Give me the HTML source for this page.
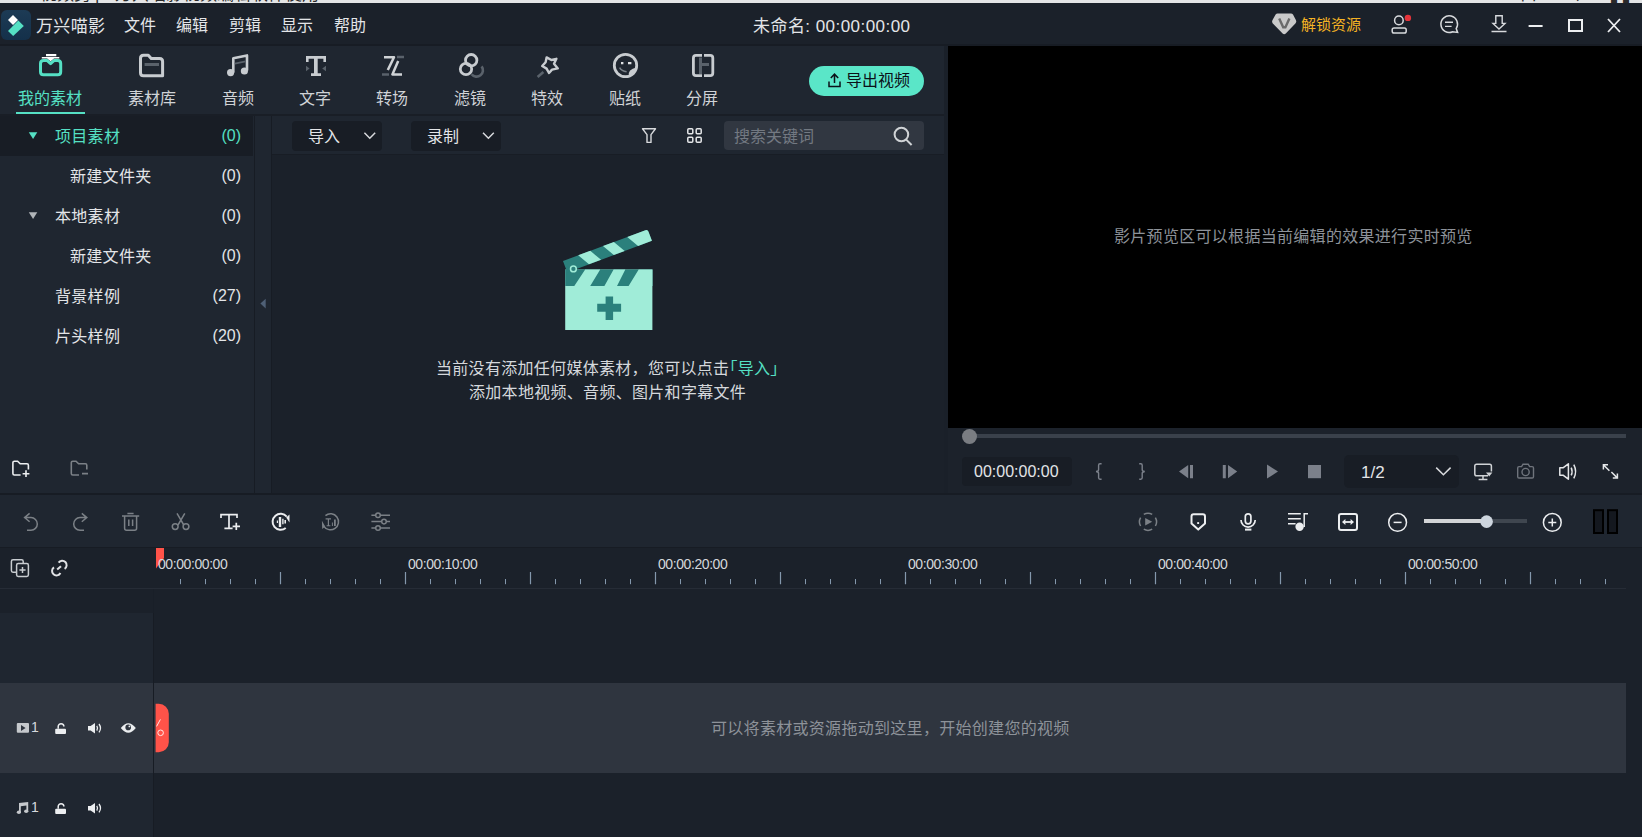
<!DOCTYPE html>
<html lang="zh-CN">
<head>
<meta charset="utf-8">
<title>万兴喵影</title>
<style>
*{box-sizing:border-box;margin:0;padding:0}
html,body{width:1642px;height:837px;overflow:hidden;background:#1b212a}
body{position:relative;font-family:"Liberation Sans","Noto Sans CJK SC",sans-serif;color:#d5d8dc;font-size:16px}
.a{position:absolute}
.t{position:absolute;white-space:nowrap;line-height:1;transform:translateY(1px)}
svg{position:absolute;overflow:visible}
/* top */
#strip{left:0;top:0;width:1642px;height:3px;background:#e4e5e6;overflow:hidden}
#strip span{position:absolute;top:-14px;font-size:17px;line-height:1;color:#2a2a2a;white-space:nowrap}
#titlebar{left:0;top:3px;width:1642px;height:41px;background:#1b212a}
#titleline{left:0;top:44px;width:1642px;height:2px;background:#171c24}
.menu{top:17px;font-size:16px;color:#e3e5e8}
/* tabs */
#tabbar{left:0;top:46px;width:944px;height:68px;background:#1f2630}
#tabline{left:0;top:114px;width:944px;height:2px;background:#191e26}
.tab{top:90px;font-size:16px;color:#d0d3d7;width:100px;text-align:center}
/* tree */
#tree{left:0;top:116px;width:255px;height:377px;background:#1f2630}
#treesel{left:0;top:116px;width:253px;height:40px;background:#181d25}
.tr{font-size:16px;color:#e3e5e8;letter-spacing:0.3px}
.cnt{font-size:16px;color:#e3e5e8;text-align:right;width:60px;transform:none}
#split{left:254px;top:116px;width:18px;height:377px;background:#1f2630;border-left:1px solid #171c24;border-right:1px solid #171c24}
/* media */
#media{left:272px;top:116px;width:672px;height:377px;background:#1b212a}
#mediabar{left:272px;top:116px;width:672px;height:39px;background:#1f2630;border-bottom:1px solid #181d25}
.btn{background:#181d25;border-radius:4px;height:30px;top:121px}
/* preview */
#pvwrap{left:944px;top:46px;width:698px;height:447px;background:#1c222b;border-left:4px solid #1a2029}
#pv{left:948px;top:46px;width:694px;height:382px;background:#000}
/* timeline */
#hsep{left:0;top:493px;width:1642px;height:2px;background:#171c24}
#tlbar{left:0;top:495px;width:1642px;height:52px;background:#1f2630}
.rl{top:556px;font-size:14px;letter-spacing:-0.42px;color:#d5d8dc}
#ruler{left:0;top:547px;width:1642px;height:42px;background:#1b212a}
</style>
</head>
<body>
<div class="a" id="titlebar"></div>
<div class="a" id="strip"><span style="left:11px">A</span><span style="left:40px">视频剪</span><span style="left:95px">|</span><span style="left:115px">万兴喵影视频编辑软件使用</span><span style="left:1520px">口</span><span style="left:1563px">公</span><span style="left:1611px">▌▌</span></div>
<div class="a" id="titleline"></div>

<!-- logo -->
<svg style="left:1px;top:10px" width="30" height="30" viewBox="0 0 30 30">
  <defs><linearGradient id="lg" x1="0" y1="0" x2="0" y2="1"><stop offset="0" stop-color="#1d3b55"/><stop offset="1" stop-color="#14304a"/></linearGradient></defs>
  <rect x="0" y="0" width="30" height="30" rx="6" fill="url(#lg)"/>
  <path d="M12 5 L17 10 L12 15 L7 10 Z" fill="#fff"/>
  <path d="M17.3 10.5 L22.8 16 L12.2 26 L7 21 Z" fill="#55e0c4"/>
</svg>
<div class="t menu" style="left:36px;font-size:17px;letter-spacing:0.35px">万兴喵影</div>
<div class="t menu" style="left:124px">文件</div>
<div class="t menu" style="left:176px">编辑</div>
<div class="t menu" style="left:229px">剪辑</div>
<div class="t menu" style="left:281px">显示</div>
<div class="t menu" style="left:334px">帮助</div>
<div class="t menu" style="left:753px;font-size:17px;letter-spacing:0.45px">未命名: 00:00:00:00</div>
<div class="t" style="left:1301px;top:16px;font-size:15px;color:#f5b324">解锁资源</div>

<!-- tab bar -->
<div class="a" id="tabbar"></div>
<div class="a" id="tabline"></div>
<div class="t tab" style="left:0px;color:#55e0c4">我的素材</div>
<div class="a" style="left:16px;top:112px;width:69px;height:2px;background:#55e0c4"></div>
<div class="t tab" style="left:102px">素材库</div>
<div class="t tab" style="left:188px">音频</div>
<div class="t tab" style="left:265px">文字</div>
<div class="t tab" style="left:342px">转场</div>
<div class="t tab" style="left:420px">滤镜</div>
<div class="t tab" style="left:497px">特效</div>
<div class="t tab" style="left:575px">贴纸</div>
<div class="t tab" style="left:652px">分屏</div>

<!-- export button -->
<div class="a" style="left:809px;top:66px;width:115px;height:30px;border-radius:15px;background:#5ae6c8"></div>
<div class="t" style="left:846px;top:72px;font-size:16px;color:#0b1118">导出视频</div>

<!-- tree -->
<div class="a" id="tree"></div>
<div class="a" id="treesel"></div>
<div class="t tr" style="left:55px;top:128px;color:#55e0c4">项目素材</div>
<div class="t cnt" style="left:181px;top:128px;color:#55e0c4">(0)</div>
<div class="t tr" style="left:70px;top:168px">新建文件夹</div>
<div class="t cnt" style="left:181px;top:168px">(0)</div>
<div class="t tr" style="left:55px;top:208px">本地素材</div>
<div class="t cnt" style="left:181px;top:208px">(0)</div>
<div class="t tr" style="left:70px;top:248px">新建文件夹</div>
<div class="t cnt" style="left:181px;top:248px">(0)</div>
<div class="t tr" style="left:55px;top:288px">背景样例</div>
<div class="t cnt" style="left:181px;top:288px">(27)</div>
<div class="t tr" style="left:55px;top:328px">片头样例</div>
<div class="t cnt" style="left:181px;top:328px">(20)</div>
<div class="a" id="split"></div>

<!-- media -->
<div class="a" id="media"></div>
<div class="a" id="mediabar"></div>
<div class="a btn" style="left:292px;width:90px"></div>
<div class="t" style="left:308px;top:128px;font-size:16px;color:#e3e5e8">导入</div>
<div class="a btn" style="left:411px;width:90px"></div>
<div class="t" style="left:427px;top:128px;font-size:16px;color:#e3e5e8">录制</div>
<div class="a" style="left:724px;top:121px;width:200px;height:29px;border-radius:4px;background:#313741"></div>
<div class="t" style="left:734px;top:128px;font-size:16px;color:#737982">搜索关键词</div>
<div class="t" style="left:436px;top:360px;font-size:16px;color:#d5d8dc;letter-spacing:0.3px">当前没有添加任何媒体素材，您可以点击<span style="color:#55e0c4">｢导入｣</span></div>
<div class="t" style="left:469px;top:384px;font-size:16px;color:#d5d8dc;letter-spacing:0.3px">添加本地视频、音频、图片和字幕文件</div>

<!-- preview -->
<div class="a" id="pvwrap"></div>
<div class="a" id="pv"></div>
<div class="t" style="left:1114px;top:228px;font-size:16px;color:#8d9299;letter-spacing:0.3px">影片预览区可以根据当前编辑的效果进行实时预览</div>
<div class="a" style="left:969px;top:434px;width:657px;height:4px;background:#3a414b"></div>
<div class="a" style="left:962px;top:429px;width:15px;height:15px;border-radius:8px;background:#7a7d82"></div>
<div class="a" style="left:962px;top:457px;width:110px;height:29px;border-radius:4px;background:#181d25"></div>
<div class="t" style="left:974px;top:463px;font-size:16px;color:#e3e5e8">00:00:00:00</div>
<div class="a" style="left:1344px;top:455px;width:115px;height:33px;border-radius:5px;background:#181d25"></div>
<div class="t" style="left:1361px;top:463px;font-size:17px;color:#e3e5e8">1/2</div>

<!-- timeline -->
<div class="a" id="hsep"></div>
<div class="a" id="tlbar"></div>
<div class="a" id="ruler"></div>
<div class="a" style="left:0;top:547px;width:1642px;height:1px;background:#171c24"></div>
<div class="a" style="left:0;top:588px;width:1626px;height:1px;background:#262c36"></div>
<div class="a" style="left:0;top:613px;width:154px;height:70px;background:#1f2630"></div>
<div class="a" style="left:0;top:683px;width:1626px;height:90px;background:#2f353f"></div>
<div class="a" style="left:0;top:773px;width:154px;height:64px;background:#1f2630"></div>
<div class="a" style="left:153px;top:589px;width:1px;height:24px;background:#191f28"></div>
<div class="a" style="left:153px;top:613px;width:1px;height:224px;background:#171c24"></div>
<div class="t" style="left:711px;top:720px;font-size:16px;color:#8d9299;letter-spacing:0.3px">可以将素材或资源拖动到这里，开始创建您的视频</div>
<div class="t" style="left:31px;top:719px;font-size:14px;color:#d5d8dc">1</div>
<div class="t" style="left:31px;top:799px;font-size:14px;color:#d5d8dc">1</div>

<svg id="ico" style="left:0;top:0" width="1642" height="837" viewBox="0 0 1642 837" fill="none" stroke-linecap="butt" stroke-linejoin="miter">
<!-- ===== title bar right ===== -->
<path d="M1277.6 13.5 H1291 Q1292.2 13.5 1293 14.6 L1296 20.3 Q1296.8 21.8 1295.6 23.2 L1285.8 33.6 Q1284.2 35 1282.6 33.6 L1272.6 23.2 Q1271.6 21.8 1272.4 20.3 L1275.6 14.6 Q1276.3 13.5 1277.6 13.5 Z" fill="#c9c9c9"/>
<path d="M1279.2 18.6 L1283.2 27.2 H1285.4 L1289.4 18.6" stroke="#6a6a6a" stroke-width="2.4"/>
<g stroke="#d8dadd" stroke-width="1.5">
<circle cx="1398.9" cy="20.4" r="4.3"/>
<rect x="1392.2" y="28" width="14" height="5" rx="1.8"/>
<path d="M1456.2 28.6 A8.3 8.3 0 1 0 1452.6 31.7 L1457.6 32.4 Z"/>
<path d="M1445 22.2 H1453 M1445 26.4 H1451.6" stroke-width="1.4"/>
<path d="M1495.8 15.8 H1502.2 V23.4 H1505 L1499 29 L1493 23.4 H1495.8 Z" stroke-width="1.4"/>
<path d="M1491.5 31.5 H1506.5"/>
</g>
<circle cx="1407.9" cy="17.9" r="3.2" fill="#e6343b"/>
<path d="M1528.6 26 H1542.6 M1569 20 H1582 V31 H1569 Z" stroke="#eceef0" stroke-width="2"/>
<path d="M1608 19 L1620 32 M1620 19 L1608 32" stroke="#eceef0" stroke-width="1.8"/>

<!-- ===== tab icons ===== -->
<path d="M40.5 63.4 Q40.5 60.4 43.5 60.4 H47 L50.6 63.6 L54.2 60.4 H57.7 Q60.7 60.4 60.7 63.4 V71.7 Q60.7 74.7 57.7 74.7 H43.5 Q40.5 74.7 40.5 71.7 Z" stroke="#55e0c4" stroke-width="3" stroke-linejoin="round"/>
<path d="M46 54 H56.3 V56.2 H46 Z M41.8 56.9 H59.3 V58.5 H54 L50.6 61.2 L47.2 58.5 H41.8 Z" fill="#ffffff"/>
<path d="M140.5 58.3 Q140.5 55.3 143.5 55.3 H148.3 L151.2 58.6 H159.6 Q162.6 58.6 162.6 61.6 V75.7 H143.5 Q140.5 75.7 140.5 72.7 Z" stroke="#c8ccd0" stroke-width="3" stroke-linejoin="round"/>
<path d="M144.6 64.5 H159" stroke="#5a626b" stroke-width="3"/>
<!-- music -->
<path d="M233.3 72.5 V58.3 L247 55.4 V70.5" stroke="#c8ccd0" stroke-width="2.6" stroke-linejoin="round"/>
<circle cx="230.6" cy="72.6" r="3.6" fill="#c8ccd0"/><circle cx="244.4" cy="71" r="3.6" fill="#c8ccd0"/>
<path d="M234.8 63.6 L245.6 61.4" stroke="#5a626b" stroke-width="1.6"/>
<!-- T -->
<path d="M306 62 V56 H326 V62 H323.4 V58.8 H317.7 V73.2 H321 V76 H311 V73.2 H314 V58.8 H308.6 V62 Z" fill="#c8ccd0"/>
<path d="M306 65.7 L309.6 68.5 L306 71.3 Z M326 65.7 L322.2 68.5 L326 71.3 Z" fill="#5a626b"/>
<!-- transition -->
<path d="M384 57.2 H394 L387.8 70 M398.2 61 L392.4 74.4 H402" stroke="#d0d3d6" stroke-width="2.5" stroke-linejoin="round"/>
<path d="M397 57 H404 M382 74.5 H389" stroke="#5a626b" stroke-width="2.6"/>
<!-- filter -->
<path d="M481.6 66.4 A6 6 0 1 1 471.6 74.2" stroke="#5a626b" stroke-width="2.6"/>
<circle cx="471.2" cy="60.2" r="5.7" stroke="#c8ccd0" stroke-width="2.8"/>
<circle cx="466" cy="69" r="5.7" stroke="#c8ccd0" stroke-width="2.8"/>
<!-- star -->
<path d="M546.6 57.4 L551.4 60 L556.4 58.8 L554 63.8 L557.8 68.4 L552 69.6 L549 73 L546.6 68.6 L542.2 66 L545.6 62.2 Z" stroke="#c8ccd0" stroke-width="2.4" stroke-linejoin="round"/>
<path d="M537.6 77 L543.4 72" stroke="#5a626b" stroke-width="2.6"/>
<!-- sticker -->
<circle cx="625.5" cy="65.5" r="11.2" stroke="#c8ccd0" stroke-width="2.8"/>
<path d="M636.6 67.6 A11.2 11.2 0 0 1 628.6 76.4 Q627.6 69.4 636.6 67.6 Z" fill="#c8ccd0"/>
<path d="M621 62 H623.4 V64.2 H621 Z M628 62 H631.4 V64.2 H628 Z" fill="#dfe1e4"/>
<path d="M619.6 67.6 Q621.6 71 626.6 71.8" stroke="#7a8189" stroke-width="1.5"/>
<!-- split -->
<path d="M702 55.4 H696 Q693.4 55.4 693.4 58 V73 Q693.4 75.6 696 75.6 H702 M704 55.4 H710.2 Q712.8 55.4 712.8 58 V73 Q712.8 75.6 710.2 75.6 H704" stroke="#c8ccd0" stroke-width="2.8"/>
<path d="M699 57.5 H702 V63 H709 V66 H702 V74 H699 Z" fill="#5a626b"/>

<!-- export icon -->
<path d="M834.5 83 V74.4 M830.8 78 L834.5 74.2 L838.2 78 M829 81.5 V86.6 H840 V81.5" stroke="#0b1118" stroke-width="1.5"/>

<!-- tree arrows -->
<path d="M28.8 132.2 H37.3 L33.05 138.9 Z" fill="#55e0c4"/>
<path d="M28.8 212.2 H37.3 L33.05 218.9 Z" fill="#b0b4b8"/>
<path d="M265.7 298.7 V308.6 L260.4 303.6 Z" fill="#4f6076"/>

<!-- media bar -->
<path d="M364.4 132.8 L369.8 138.2 L375.2 132.8 M483 132.8 L488.4 138.2 L493.8 132.8" stroke="#d8dadd" stroke-width="1.5"/>
<path d="M642.5 128.8 H655.5 L651 134.6 V142.4 H647 V134.6 Z" stroke="#d8dadd" stroke-width="1.4" stroke-linejoin="round"/>
<g stroke="#e4e6e8" stroke-width="1.5"><rect x="687.8" y="128.8" width="5" height="5" rx="1"/><rect x="696.2" y="128.8" width="5" height="5" rx="1"/><rect x="687.8" y="137.2" width="5" height="5" rx="1"/><rect x="696.2" y="137.2" width="5" height="5" rx="1"/></g>
<circle cx="901.4" cy="134.5" r="6.8" stroke="#d0d3d6" stroke-width="2"/><path d="M906.2 139.6 L911.6 145" stroke="#d0d3d6" stroke-width="2"/>

<!-- folder +/- -->
<path d="M20.6 475 H14.4 Q12.9 475 12.9 473.5 V462.6 Q12.9 461.2 14.4 461.2 H17.6 L20.2 463.8 H27 Q28.4 463.8 28.4 465.2 V469.4 M22.6 473.7 H29.4 M26 470.3 V477.1" stroke="#eceef0" stroke-width="1.6"/>
<path d="M79 475 H72.8 Q71.3 475 71.3 473.5 V462.6 Q71.3 461.2 72.8 461.2 H76 L78.6 463.8 H85.4 Q86.8 463.8 86.8 465.2 V469.4 M82 473.6 H88" stroke="#7b8086" stroke-width="1.6"/>
</svg>


<svg id="ico2" style="left:0;top:0" width="1642" height="837" viewBox="0 0 1642 837" fill="none">
<!-- clapper -->
<g>
<path d="M565.2 269.4 H652.4 V330.1 H565.2 Z" fill="#a0ecd8"/>
<path d="M565.2 269.4 H652.4 V286 H565.2 Z" fill="#2b807c"/>
<path d="M585.2 269.4 H600.2 L590.2 286 H574.3 Z M613.6 269.4 H625.3 L617 286 H604.4 Z M638.7 269.4 H652.4 V286 H628.6 Z" fill="#a0ecd8"/>
<path d="M605.6 296.6 H613.1 V303.8 H621.1 V311.8 H613.1 V320 H605.6 V311.8 H597.2 V303.8 H605.6 Z" fill="#2b807c"/>
<g transform="translate(573.4,268.9) rotate(-20.5)">
<path d="M-7 -11 H81 Q83.4 -11 83.4 -8.6 V1.2 H-7 Z" fill="#2b807c"/>
<path d="M9.2 -11 H22.1 L29.1 1.2 H16.2 Z M35.7 -11 H47.3 L54.3 1.2 H42.7 Z M61.6 -11 H81 Q83.4 -11 83.4 -8.6 V1.2 H68.6 Z" fill="#a0ecd8"/>
</g>
<circle cx="573.4" cy="268.9" r="2.9" stroke="#a0ecd8" stroke-width="1.5" fill="#2b807c"/>
</g>

<!-- preview controls -->
<g stroke="#7b808a" stroke-width="1.4">
<path d="M1101.6 463.8 H1100 Q1098.6 463.8 1098.6 465.2 V469.4 Q1098.6 471.4 1096 471.5 Q1098.6 471.6 1098.6 473.6 V477.8 Q1098.6 479.2 1100 479.2 H1101.6"/>
<path d="M1139.2 463.8 H1140.8 Q1142.2 463.8 1142.2 465.2 V469.4 Q1142.2 471.4 1144.8 471.5 Q1142.2 471.6 1142.2 473.6 V477.8 Q1142.2 479.2 1140.8 479.2 H1139.2"/>
</g>
<g fill="#7b808a">
<path d="M1188.2 465 V478.2 L1179 471.6 Z M1190 465 H1193 V478.2 H1190 Z"/>
<path d="M1222.8 465 H1225.8 V478.2 H1222.8 Z M1228 465 V478.2 L1237.2 471.6 Z"/>
<path d="M1267 464.6 V478.6 L1278 471.6 Z"/>
<path d="M1308 465 H1321 V478.2 H1308 Z"/>
</g>
<path d="M1436.2 467.6 L1443.4 474.8 L1450.6 467.6" stroke="#d8dadd" stroke-width="1.5"/>
<!-- monitor -->
<g stroke="#d0d3d6" stroke-width="1.5">
<path d="M1488 475.8 H1476.6 Q1474.8 475.8 1474.8 474 V466 Q1474.8 464.2 1476.6 464.2 H1489.6 Q1491.4 464.2 1491.4 466 V471.4"/>
<path d="M1483 476 V479.2 M1478.6 479.4 H1487.4"/>
</g>
<path d="M1486 472.6 H1492.4 L1489.2 476.6 Z" fill="#d0d3d6"/>
<!-- camera -->
<g stroke="#6f747c" stroke-width="1.4">
<path d="M1519 466.6 H1521.6 L1523 464.2 H1528.2 L1529.6 466.6 H1532.2 Q1533.5 466.6 1533.5 467.9 V476.7 Q1533.5 478 1532.2 478 H1519 Q1517.7 478 1517.7 476.7 V467.9 Q1517.7 466.6 1519 466.6 Z"/>
<circle cx="1525.6" cy="472" r="3.6"/>
</g>
<!-- volume -->
<g stroke="#e4e6e8" stroke-width="1.5" stroke-linejoin="round">
<path d="M1559.8 467.8 H1563 L1568.4 463.8 V479.2 L1563 475.2 H1559.8 Z"/>
<path d="M1571.2 467.6 Q1573 471.5 1571.2 475.4 M1573.8 464.6 Q1577.4 471.5 1573.8 478.4"/>
</g>
<!-- fullscreen -->
<path d="M1603.4 469.4 V464.8 H1608 M1603.8 465.2 L1609.4 470.8 M1617.4 473.4 V478 H1612.8 M1617 477.6 L1611.4 472" stroke="#e4e6e8" stroke-width="1.5"/>

<!-- timeline toolbar left -->
<g stroke="#7b8086" stroke-width="1.5">
<path d="M24.6 517.6 H31 A6.3 6.3 0 0 1 31 530.2 H27 M29.6 513.4 L24.6 517.6 L29.6 521.8"/>
<path d="M86.8 517.6 H80 A6.3 6.3 0 0 0 80 530.2 H84 M81.8 513.4 L86.8 517.6 L81.8 521.8"/>
<path d="M122 516 H139.2 M127.4 513.4 H133.6 M124.6 516 V528.2 Q124.6 530.2 126.6 530.2 H134.6 Q136.6 530.2 136.6 528.2 V516 M128.8 519.6 V526 M132.6 519.6 V526"/>
<path d="M177 513.4 L183.8 525 M184.8 513.4 L178 525"/>
<circle cx="175.2" cy="526.6" r="2.9"/><circle cx="186" cy="526.6" r="2.9"/>
</g>
<!-- T+ -->
<path d="M221 518 V514.6 H237 V518 M229 514.6 V528.4 M224.4 528.4 H232.6 M232.6 526.4 H240 M236.3 522.7 V530.1" stroke="#eceef0" stroke-width="1.7"/>
<!-- audio sync -->
<path d="M286.73 516.66 A8 8 0 1 0 285.74 527.93" stroke="#eceef0" stroke-width="2"/>
<path d="M286.2 517.4 L289.5 514.4 L289.5 522.4 Z" fill="#eceef0"/>
<path d="M278.8 517 H281.2 V527 H278.8 Z M282.2 518.8 H283.6 V524.2 H282.2 Z M276.8 520.4 H278 V523 H276.8 Z M284.4 520 H286 V523.4 H284.4 Z" fill="#eceef0"/>
<!-- T speed -->
<path d="M325.47 515.58 A8 8 0 1 1 323.72 526.04" stroke="#7b8086" stroke-width="1.5"/>
<path d="M321.9 520.8 L322.2 528.9 L325.2 526.4 Z" fill="#7b8086"/>
<path d="M325.6 518.2 H331 V519.6 H329 V525.2 H330.4 V526.2 H326.6 V525.2 H327.8 V519.6 H325.6 Z M331.9 522.6 H332.9 V526 H331.9 Z M334 519.4 H335.8 V526 H334 Z" fill="#7b8086"/>
<!-- sliders -->
<g stroke="#7b8086" stroke-width="1.5">
<path d="M371.4 515.2 H375.6 M380.4 515.2 H390 M371.4 521.6 H381.6 M386.4 521.6 H390 M371.4 528 H375.6 M380.4 528 H390"/>
<circle cx="378" cy="515.2" r="2.3"/><circle cx="384" cy="521.6" r="2.3"/><circle cx="378" cy="528" r="2.3"/>
</g>

<!-- timeline toolbar right -->
<g stroke="#7b8086" stroke-width="1.5">
<path d="M1143.8 514.4 A8.5 8.5 0 0 1 1152.2 514.4 M1155.4 517.6 A8.5 8.5 0 0 1 1155.4 526 M1152.2 529.2 A8.5 8.5 0 0 1 1143.8 529.2 M1140.6 526 A8.5 8.5 0 0 1 1140.6 517.6"/>
</g>
<path d="M1145.2 518 V525.6 L1152.2 521.8 Z" fill="#7b8086"/>
<path d="M1191.5 516.4 Q1191.5 514.3 1193.6 514.3 H1202.9 Q1205 514.3 1205 516.4 V523.6 L1198.25 529.6 L1191.5 523.6 Z" stroke="#eceef0" stroke-width="2" stroke-linejoin="round"/>
<rect x="1197.2" y="522.1" width="1.9" height="1.9" fill="#eceef0"/>
<!-- mic -->
<g stroke="#eceef0" stroke-width="1.7">
<rect x="1245.3" y="513.8" width="5.6" height="10" rx="2.8"/>
<path d="M1241 520 A7.1 7.1 0 0 0 1255.2 520"/>
</g>
<rect x="1245" y="528.6" width="6.4" height="2" fill="#eceef0"/>
<!-- music list -->
<path d="M1288 513.8 H1300.8 M1288 518.8 H1300.8 M1288 523.7 H1295.6 M1304.2 527 V513.8 H1308" stroke="#eceef0" stroke-width="1.5"/>
<circle cx="1299.6" cy="526.7" r="4.2" fill="#eceef0"/>
<!-- fit -->
<rect x="1339" y="514.1" width="18" height="15.8" rx="2" stroke="#eceef0" stroke-width="2"/>
<path d="M1344 522 H1352" stroke="#eceef0" stroke-width="1.8"/>
<path d="M1342 522 L1345.4 519 V525 Z M1354 522 L1350.6 519 V525 Z" fill="#eceef0"/>
<!-- zoom -->
<g stroke="#eceef0" stroke-width="1.5">
<circle cx="1397.6" cy="522.4" r="8.9"/><path d="M1393.6 522.4 H1401.6"/>
<circle cx="1552.3" cy="522.4" r="8.9"/><path d="M1548.3 522.4 H1556.3 M1552.3 518.4 V526.4"/>
</g>
<rect x="1424" y="519" width="103" height="4" fill="#3f464f"/>
<rect x="1424" y="519" width="62" height="4" fill="#d2d4d6"/>
<circle cx="1486.6" cy="521.6" r="6.3" fill="#cdd5de"/>
<rect x="1594" y="510.2" width="9" height="22.8" fill="#14181f" stroke="#000" stroke-width="2"/>
<rect x="1608" y="510.2" width="9" height="22.8" fill="#14181f" stroke="#000" stroke-width="2"/>

<!-- ruler -->
<path d="M180.5 579 V584.2 M205.5 579 V584.2 M230.5 579 V584.2 M255.5 579 V584.2 M305.5 579 V584.2 M330.5 579 V584.2 M355.5 579 V584.2 M380.5 579 V584.2 M430.5 579 V584.2 M455.5 579 V584.2 M480.5 579 V584.2 M505.5 579 V584.2 M555.5 579 V584.2 M580.5 579 V584.2 M605.5 579 V584.2 M630.5 579 V584.2 M680.5 579 V584.2 M705.5 579 V584.2 M730.5 579 V584.2 M755.5 579 V584.2 M805.5 579 V584.2 M830.5 579 V584.2 M855.5 579 V584.2 M880.5 579 V584.2 M930.5 579 V584.2 M955.5 579 V584.2 M980.5 579 V584.2 M1005.5 579 V584.2 M1055.5 579 V584.2 M1080.5 579 V584.2 M1105.5 579 V584.2 M1130.5 579 V584.2 M1180.5 579 V584.2 M1205.5 579 V584.2 M1230.5 579 V584.2 M1255.5 579 V584.2 M1305.5 579 V584.2 M1330.5 579 V584.2 M1355.5 579 V584.2 M1380.5 579 V584.2 M1430.5 579 V584.2 M1455.5 579 V584.2 M1480.5 579 V584.2 M1505.5 579 V584.2 M1555.5 579 V584.2 M1580.5 579 V584.2 M1605.5 579 V584.2" stroke="#8498ad" stroke-width="1"/>
<path d="M280.5 572 V584.2 M405.5 572 V584.2 M530.5 572 V584.2 M655.5 572 V584.2 M780.5 572 V584.2 M905.5 572 V584.2 M1030.5 572 V584.2 M1155.5 572 V584.2 M1280.5 572 V584.2 M1405.5 572 V584.2 M1530.5 572 V584.2" stroke="#8498ad" stroke-width="1.2"/>
<path d="M156 548 H164 V558 L156 568.4 Z" fill="#ff5349"/>
<!-- add track / link -->
<g stroke="#c8ccd0" stroke-width="1.5">
<path d="M16.6 572.2 H13 Q11.4 572.2 11.4 570.6 V561.4 Q11.4 559.8 13 559.8 H21.6 Q23.2 559.8 23.2 561.4 V563"/>
<rect x="16.6" y="563.6" width="11.8" height="12.8" rx="1.6"/>
<path d="M19.4 570 H25.6 M22.5 566.9 V573.1"/>
</g>
<g stroke="#e0e2e5" stroke-width="2">
<path d="M54 567.4 A4.4 4.4 0 1 0 60.4 573"/>
<path d="M58.6 562.6 A4.4 4.4 0 1 1 64.6 568.8"/>
<path d="M57.2 569.6 L61 566.2"/>
</g>

<!-- track icons -->
<g>
<rect x="16.8" y="723" width="12.2" height="9.8" rx="1" fill="#c5c8cc"/>
<path d="M21 725 V731 L25.6 728 Z" fill="#2f353f"/>
<path d="M19 812.4 V803 L28.2 802 V811.4 H26.4 V805.6 L20.8 806.3 V812.4 Z" fill="#c5c8cc"/>
<ellipse cx="18.9" cy="812.3" rx="2.1" ry="1.8" fill="#c5c8cc"/><ellipse cx="26.2" cy="811.2" rx="2.1" ry="1.7" fill="#c5c8cc"/>
</g>
<g>
<rect x="55.2" y="728.8" width="10.8" height="5.2" rx="1" fill="#eceef0"/>
<path d="M58.2 728.8 V726.6 A2.85 2.85 0 0 1 63.9 726.6" stroke="#eceef0" stroke-width="1.5"/>
<path d="M88 726 H90.6 L95 723 V733.4 L90.6 730.6 H88 Z" fill="#eceef0"/>
<path d="M96.8 725.8 Q98.4 728.2 96.8 730.6 M99 724 Q102 728.2 99 732.4" stroke="#eceef0" stroke-width="1.3"/>
</g>
<g transform="translate(0,80)">
<rect x="55.2" y="728.8" width="10.8" height="5.2" rx="1" fill="#eceef0"/>
<path d="M58.2 728.8 V726.6 A2.85 2.85 0 0 1 63.9 726.6" stroke="#eceef0" stroke-width="1.5"/>
<path d="M88 726 H90.6 L95 723 V733.4 L90.6 730.6 H88 Z" fill="#eceef0"/>
<path d="M96.8 725.8 Q98.4 728.2 96.8 730.6 M99 724 Q102 728.2 99 732.4" stroke="#eceef0" stroke-width="1.3"/>
</g>
<path d="M120.8 727.9 Q128.3 718.4 135.8 727.9 Q128.3 737.4 120.8 727.9 Z" fill="#eceef0"/>
<circle cx="128.2" cy="727.4" r="2.8" fill="#2f353f"/><circle cx="129.4" cy="726.4" r="0.9" fill="#eceef0"/>
<!-- red tab -->
<path d="M155.6 703.8 H158.8 A10 10 0 0 1 168.8 713.8 V742.2 A10 10 0 0 1 158.8 752.2 H155.6 Z" fill="#ff5349"/>
<path d="M160.4 719.4 L156.6 726.4" stroke="#ffe9e6" stroke-width="1"/>
<circle cx="160.6" cy="732.8" r="2.8" stroke="#ffe9e6" stroke-width="1"/>
</svg>
<div class="t rl" style="left:408px">00:00:10:00</div>
<div class="t rl" style="left:658px">00:00:20:00</div>
<div class="t rl" style="left:908px">00:00:30:00</div>
<div class="t rl" style="left:1158px">00:00:40:00</div>
<div class="t rl" style="left:1408px">00:00:50:00</div>

<div class="t rl" style="left:158px">00:00:00:00</div>

</body>
</html>
